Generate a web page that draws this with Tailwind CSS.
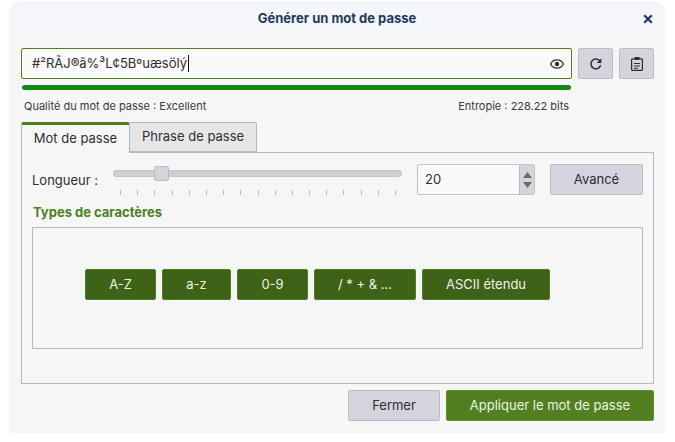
<!DOCTYPE html>
<html lang="fr">
<head>
    <meta charset="UTF-8">
    <title>Générer un mot de passe</title>
    <script src="https://cdn.jsdelivr.net/npm/@tailwindcss/browser@4"></script>
</head>
<body class="bg-white w-[675px] h-[442px] overflow-hidden font-['Inter',sans-serif] text-[#2e2e33]">
    <div class="ml-[9px] mt-px w-[656px] h-[432px] rounded-t-[12px] rounded-b-[2px] bg-[#f6f6f6] flex flex-col">
        <!-- header -->
        <div class="h-[37px] rounded-t-[12px] bg-[#f5f6f9] flex items-center justify-center relative">
            <span class="text-[13px] font-bold text-[#1c3b5c] -mt-[1px]">Générer un mot de passe</span>
            <svg class="absolute right-[12px] top-[13px]" width="10" height="10" viewBox="0 0 10 10"><path d="M1.2 1.2L8.8 8.8M8.8 1.2L1.2 8.8" stroke="#1c3b5c" stroke-width="2.2"/></svg>
        </div>

        <div class="pl-[12px] pr-[11px] pt-[10px] flex flex-col">
            <!-- password row -->
            <div class="flex gap-[6px] h-[31px]">
                <div class="w-[551px] border border-[#4e7f1e] rounded-[2px] bg-[#fafafa] flex items-center pl-[10px] pr-[6px] text-[13px] text-[#2e2e33]">
                    <span class="border-r border-[#111] leading-[17px] pr-px">#²RÃJ®ã%³L¢5Bºuæsölý</span>
                    <svg class="ml-auto" width="16" height="16" viewBox="0 0 16 16" fill="none"><path d="M1.5 8C3 5.2 5.3 3.9 8 3.9S13 5.2 14.5 8C13 10.8 10.7 12.1 8 12.1S3 10.8 1.5 8Z" stroke="#2e2e33" stroke-width="1.3"/><circle cx="8" cy="8" r="2.2" fill="#2e2e33"/></svg>
                </div>
                <button class="w-[35px] border border-[#bcbcc2] rounded-[2px] bg-[#d4d4dd] flex items-center justify-center">
                    <svg width="14" height="14" viewBox="0 0 14 14" fill="none"><path d="M11.6 8.2A4.9 4.9 0 1 1 10.3 3.4L11.6 4.7" stroke="#2e2e33" stroke-width="1.5"/><path d="M12.4 1.3V6H7.8Z" fill="#2e2e33"/></svg>
                </button>
                <button class="w-[35px] border border-[#bcbcc2] rounded-[2px] bg-[#d4d4dd] flex items-center justify-center">
                    <svg width="14" height="16" viewBox="0 0 14 16" fill="none"><rect x="1.6" y="2.8" width="10.8" height="11.6" rx="1" stroke="#2e2e33" stroke-width="1.3"/><rect x="4.5" y="1" width="5" height="3" rx="0.5" fill="#2e2e33"/><path d="M4 7.5H10M4 10H10M4 12.2H8" stroke="#2e2e33" stroke-width="1.1"/></svg>
                </button>
            </div>

            <!-- strength bar -->
            <div class="mt-[6px] ml-px w-[549px] h-[5px] rounded-full bg-[#138a17]"></div>
            <div class="mt-[10px] ml-[3px] w-[545px] flex justify-between text-[11px] leading-[12px] text-[#3a3a3f]">
                <span>Qualité du mot de passe : Excellent</span>
                <span>Entropie : 228.22 bits</span>
            </div>

            <!-- tabs -->
            <div class="mt-[10px] flex h-[31px] text-[13px] relative z-10">
                <div class="w-[109px] border-t-[3px] border-x border-x-[#b9b9b9] border-t-[#4e7f1e] bg-[#f6f6f6] flex items-center justify-center rounded-t-[2px] text-[#2e2e33]">Mot de passe</div>
                <div class="w-[127px] h-[30px] border border-l-0 border-[#b9b9b9] bg-[#e6e6e6] flex items-center justify-center rounded-tr-[2px] text-[#2e2e33]">Phrase de passe</div>
            </div>

            <!-- panel -->
            <div class="-mt-px w-[633px] h-[232px] border border-[#b9b9b9] pt-[11px] pl-[10px] pr-[10px] flex flex-col">
                <div class="flex h-[31px]">
                    <span class="w-[81px] pt-[9px] text-[13px] leading-[15px]">Longueur :</span>
                    <div class="w-[289px] relative">
                        <div class="mt-[6px] h-[7px] rounded-[3px] bg-[#cfcfcf] border border-[#c4c4c4]"></div>
                        <div class="absolute left-[41px] top-[2px] w-[15px] h-[15px] rounded-[2px] bg-[#d4d4dd] border border-[#bcbcc2]"></div>
                        <div class="absolute left-[7px] right-[6px] top-[26px] h-[5px] flex justify-between">
                            <i class="w-px bg-[#bcbcbc]"></i><i class="w-px bg-[#bcbcbc]"></i><i class="w-px bg-[#bcbcbc]"></i><i class="w-px bg-[#bcbcbc]"></i><i class="w-px bg-[#bcbcbc]"></i><i class="w-px bg-[#bcbcbc]"></i><i class="w-px bg-[#bcbcbc]"></i><i class="w-px bg-[#bcbcbc]"></i><i class="w-px bg-[#bcbcbc]"></i><i class="w-px bg-[#bcbcbc]"></i><i class="w-px bg-[#bcbcbc]"></i><i class="w-px bg-[#bcbcbc]"></i><i class="w-px bg-[#bcbcbc]"></i><i class="w-px bg-[#bcbcbc]"></i><i class="w-px bg-[#bcbcbc]"></i><i class="w-px bg-[#bcbcbc]"></i><i class="w-px bg-[#bcbcbc]"></i>
                        </div>
                    </div>
                    <div class="ml-[15px] w-[118px] border border-[#c4c4c8] rounded-[2px] bg-[#fafafa] flex items-center text-[13px]">
                        <span class="pl-[7px] flex-1">20</span>
                        <div class="w-[15px] h-full bg-[#d4d4dd] border-l border-[#bcbcc2] flex flex-col items-center justify-center gap-[4px]">
                            <svg width="9" height="6" viewBox="0 0 9 6"><path d="M4.5 0L9 6H0Z" fill="#6a6a70"/></svg>
                            <svg width="9" height="6" viewBox="0 0 9 6"><path d="M4.5 6L0 0H9Z" fill="#6a6a70"/></svg>
                        </div>
                    </div>
                    <button class="ml-[15px] w-[93px] border border-[#bcbcc2] rounded-[2px] bg-[#d4d4dd] text-[13px]">Avancé</button>
                </div>

                <div class="mt-[10px] ml-px text-[13px] leading-[15px] font-bold text-[#4e7f1e]">Types de caractères</div>

                <!-- character types -->
                <div class="mt-[7px] w-[611px] h-[122px] border border-[#b9b9b9] rounded-[1px] pl-[52px] pt-[41px] flex gap-[6px] text-[13px] text-[#eef2e8]">
                    <div class="w-[71px] h-[31px] rounded-[2px] bg-[#3e6216] border border-[#4e7f1e] flex items-center justify-center">A-Z</div>
                    <div class="w-[69px] h-[31px] rounded-[2px] bg-[#3e6216] border border-[#4e7f1e] flex items-center justify-center">a-z</div>
                    <div class="w-[71px] h-[31px] rounded-[2px] bg-[#3e6216] border border-[#4e7f1e] flex items-center justify-center">0-9</div>
                    <div class="w-[102px] h-[31px] rounded-[2px] bg-[#3e6216] border border-[#4e7f1e] flex items-center justify-center">/ * + &amp; ...</div>
                    <div class="w-[128px] h-[31px] rounded-[2px] bg-[#3e6216] border border-[#4e7f1e] flex items-center justify-center">ASCII étendu</div>
                </div>
            </div>

            <!-- footer -->
            <div class="mt-[6px] flex justify-end gap-[6px] h-[31px] text-[13px]">
                <button class="w-[92px] border border-[#bcbcc2] rounded-[2px] bg-[#d4d4dd] text-[#2e2e33]">Fermer</button>
                <button class="w-[208px] border border-[#5c9426] rounded-[2px] bg-[#528020] text-[#eef2e8]">Appliquer le mot de passe</button>
            </div>
        </div>
    </div>
</body>
</html>
